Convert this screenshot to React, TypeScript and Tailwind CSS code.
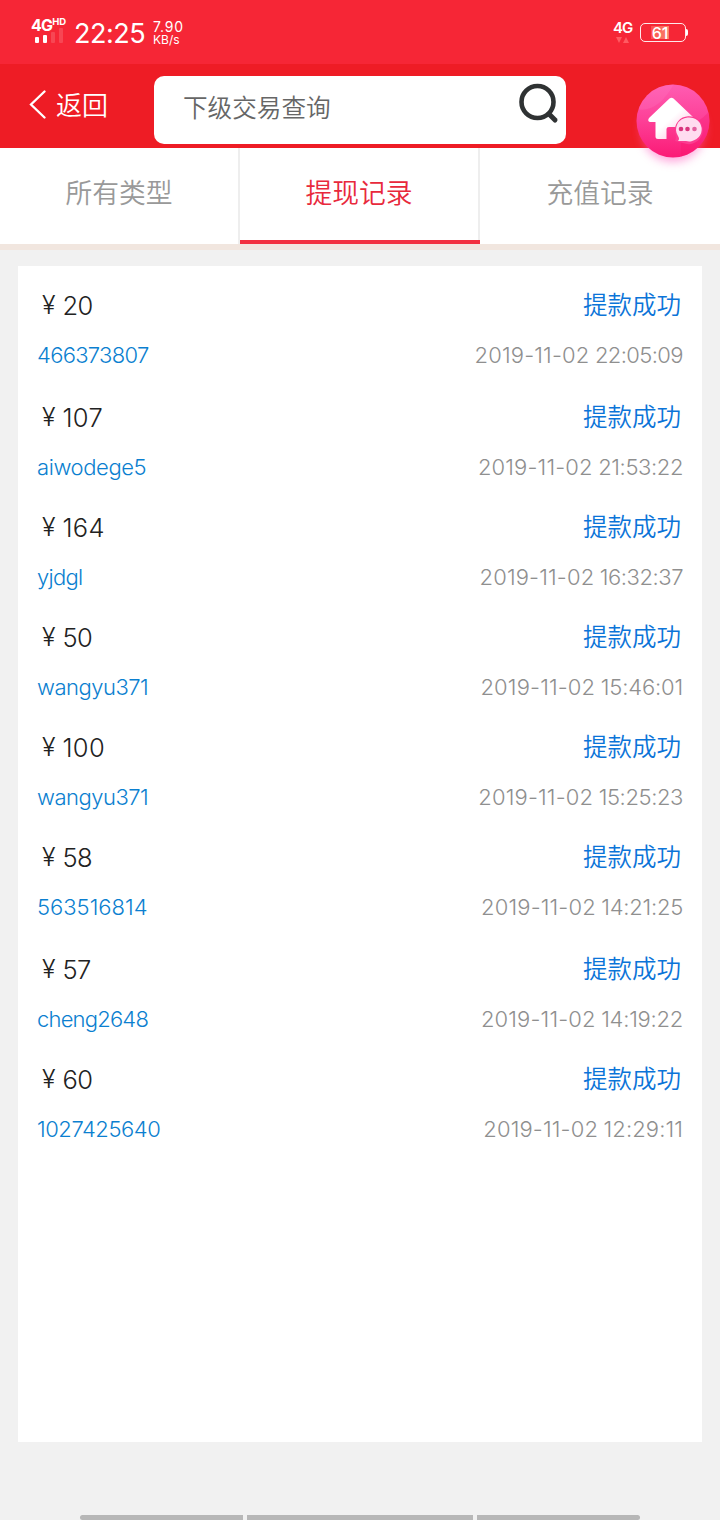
import clsx from "clsx";

const tabs = [
  { label: "所有类型", active: false },
  { label: "提现记录", active: true },
  { label: "充值记录", active: false },
];

const records = [
  { amount: "20", user: "466373807", date: "2019-11-02", time: "22:05:09", height: "h-[112px]", userTracking: "tracking-[-0.7px]", timeTracking: "tracking-[-0.6px]" },
  { amount: "107", user: "aiwodege5", date: "2019-11-02", time: "21:53:22", height: "h-[110px]", userTracking: "tracking-[-0.4px]", timeTracking: "tracking-[-0.4px]" },
  { amount: "164", user: "yjdgl", date: "2019-11-02", time: "16:32:37", height: "h-[110px]", userTracking: "tracking-[-0.7px]", timeTracking: "tracking-[-0.45px]" },
  { amount: "50", user: "wangyu371", date: "2019-11-02", time: "15:46:01", height: "h-[110px]", userTracking: "tracking-[-0.5px]", timeTracking: "tracking-[-0.15px]" },
  { amount: "100", user: "wangyu371", date: "2019-11-02", time: "15:25:23", height: "h-[110px]", userTracking: "tracking-[-0.5px]", timeTracking: "tracking-[-0.4px]" },
  { amount: "58", user: "563516814", date: "2019-11-02", time: "14:21:25", height: "h-[112px]", userTracking: "tracking-[0px]", timeTracking: "tracking-[-0.25px]" },
  { amount: "57", user: "cheng2648", date: "2019-11-02", time: "14:19:22", height: "h-[110px]", userTracking: "tracking-[-0.8px]", timeTracking: "tracking-[-0.25px]" },
  { amount: "60", user: "1027425640", date: "2019-11-02", time: "12:29:11", height: "h-[110px]", userTracking: "tracking-[-0.45px]", timeTracking: "tracking-[0.1px]" },
];

function StatusBar() {
  return (
    <div className="flex h-16 items-start justify-between bg-[#f62636] text-white">
      <div className="flex items-start pl-8">
        <div className="w-[42px] pt-[17px]">
          <div className="flex items-start whitespace-nowrap">
            <span className="-ml-px text-[16px] leading-[16px] font-bold tracking-[-0.8px]">4G</span>
            <span className="text-[9.500px] leading-[10px] font-bold">HD</span>
          </div>
          <svg width="32" height="18" viewBox="0 0 32 18" className="-mt-[7px]">
            <rect x="3" y="11" width="4" height="6" rx="1" fill="#fff" />
            <rect x="11" y="9" width="4" height="8" rx="1" fill="#fff" />
            <rect x="19" y="6" width="4" height="11" rx="1" fill="#fff" opacity=".15" />
            <rect x="27" y="2" width="4" height="15" rx="1" fill="#fff" opacity=".15" />
          </svg>
        </div>
        <span className="w-[79px] pt-[18px] text-[27px] leading-8 tracking-[-0.5px]">22:25</span>
        <div className="pt-5">
          <div className="text-[14px] leading-[14px] tracking-[0.8px]">7.90</div>
          <div className="text-[12px] leading-[11px]">KB/s</div>
        </div>
      </div>
      <div className="flex items-start pr-[32px]">
        <div className="w-[27px] pt-5">
          <div className="text-[15px] leading-[15px] font-semibold tracking-[-1px]">4G</div>
          <svg width="16" height="8" viewBox="0 0 16 8" className="ml-[2px] mt-[1px]">
            <path d="M1 1h6L4 7z" fill="#ff5a62" />
            <path d="M8 7h6L11 1z" fill="#ff5a62" />
          </svg>
        </div>
        <div className="mt-[23px] flex items-center">
          <div className="flex h-[19px] w-[46px] items-center rounded-[5px] border-[1.5px] border-white/90 pl-[10px]">
            <span className="flex h-[13px] w-[18px] items-center justify-center bg-linear-to-r from-[#fb4f50] to-[#f8806a] text-[16px] leading-none font-medium">
              61
            </span>
          </div>
          <div className="h-[7px] w-[2px] rounded-r bg-white" />
        </div>
      </div>
    </div>
  );
}

function HomeBubble() {
  return (
    <svg width="100" height="110" viewBox="0 0 100 110" className="absolute top-[71px] left-[623px]">
      <defs>
        <linearGradient id="bubble" x1="0" y1="0" x2="0" y2="1">
          <stop offset="0" stopColor="#ff5cb2" />
          <stop offset="0.5" stopColor="#fd3f96" />
          <stop offset="1" stopColor="#fb1a76" />
        </linearGradient>
        <linearGradient id="house" x1="0" y1="0" x2="1" y2="1">
          <stop offset="0.5" stopColor="#fff" />
          <stop offset="0.85" stopColor="#ffc4e2" />
        </linearGradient>
        <filter id="glow" x="-30%" y="-30%" width="160%" height="160%">
          <feGaussianBlur stdDeviation="5" />
        </filter>
        <clipPath id="disc">
          <circle cx="50" cy="50" r="36.500" />
        </clipPath>
      </defs>
      <circle cx="50" cy="59" r="32" fill="#ff5fc0" opacity=".55" filter="url(#glow)" />
      <circle cx="50" cy="50" r="36.500" fill="url(#bubble)" />
      <path d="M13 38Q34 43 51 13H13z" fill="#ff86cc" opacity=".2" clipPath="url(#disc)" />
      <path d="M58 55Q76 54 88 38V88H58z" fill="#f81469" opacity=".3" clipPath="url(#disc)" />
      <path
        d="M46.500 27.500Q48.500 26 50.500 27.500L70 46Q72 50 67 50H66V68H54V58Q54 56 52 56H46Q43.500 56 43.500 58V68H35Q32.500 68 32.500 65.500V51H27Q24 50 26 47z"
        fill="url(#house)"
      />
      <path d="M52 70Q54 67 52 61A14 14 0 1 1 64 73z" fill="#fb3c90" />
      <path
        d="M64.500 46.500A12.500 12 0 1 1 63 70H55Q57 68 55 65A12.500 12 0 0 1 64.500 46.500z"
        fill="#ffdcf0"
      />
      <circle cx="58" cy="58" r="2.300" fill="#d8357e" />
      <circle cx="64.500" cy="58" r="2.300" fill="#d8357e" />
      <circle cx="71.500" cy="58" r="2.300" fill="#e3609f" />
    </svg>
  );
}

function Header() {
  return (
    <div className="flex h-[84px] items-start bg-[#ee1c25]">
      <div className="flex h-[82px] w-[154px] items-center pl-7 text-white">
        <svg width="19" height="30" viewBox="0 0 19 30" fill="none" stroke="currentColor" strokeWidth="2.300" className="-mt-[2px]">
          <path d="M16.500 2.500L3 15.500L16.500 28.500" strokeLinecap="round" />
        </svg>
        <span className="mt-px ml-[9px] text-[26px] leading-10 font-[350]">返回</span>
      </div>
      <div className="mt-3 flex h-[68px] w-[412px] items-start justify-between rounded-[10px] bg-white pr-[6px] pl-[29px]">
        <span className="pt-[12px] text-[24.600px] leading-10 font-[350] text-[#666]">下级交易查询</span>
        <svg width="42" height="42" viewBox="0 0 42 42" fill="none" stroke="#2f3233" className="mt-[6px]">
          <circle cx="19.500" cy="20" r="16" strokeWidth="4.600" />
          <path d="M31 32L37 38" strokeWidth="5" strokeLinecap="round" />
        </svg>
      </div>
    </div>
  );
}

function Tabs() {
  return (
    <div className="grid h-[102px] grid-cols-3 border-b-[6px] border-[#f1e6df] bg-white">
      {tabs.map((tab, i) => (
        <div
          key={tab.label}
          className={clsx(
            "flex items-start justify-center pt-[25px] text-[26.800px] leading-10 font-[350]",
            i !== 1 && "text-[#999]",
            i === 0 && "border-r-2 border-[#eee]",
            tab.active && "border-b-4 border-[#f2303f] pr-[2px] text-[#e8293c] shadow-[inset_-2px_0_0_#eee]",
          )}
        >
          {tab.label}
        </div>
      ))}
    </div>
  );
}

export default function App() {
  return (
    <div className="relative flex h-[1520px] w-[720px] flex-col overflow-hidden bg-[#f1f1f1] font-['Inter','Noto_Sans_CJK_SC_DemiLight','Noto_Sans_CJK_SC',sans-serif]">
      <StatusBar />
      <Header />
      <Tabs />

      {/* Record list */}
      <div className="mx-[18px] mt-4 h-[1176px] bg-white pt-[14px] pr-[19px] pl-[19px]">
        {records.map((item) => (
          <div key={item.time} className={item.height}>
            <div className="flex h-[50px] items-center justify-between">
              <div className="flex items-center pt-[2px] pl-[5px] text-[25.500px] font-light text-[#222]">
                <span className="w-[20.500px] text-[25px]">¥</span>
                <span className={item.amount.length > 2 ? "tracking-[0.3px]" : "tracking-[-0.7px]"}>{item.amount}</span>
              </div>
              <span className="pt-px pr-[2px] text-[24.500px] font-[350] text-[#0b74d8]">提款成功</span>
            </div>
            <div className="flex h-[50px] items-center justify-between text-[22px] font-light">
              <span className={clsx("text-[#0b7fd0]", item.userTracking)}>{item.user}</span>
              <span className="flex gap-[5.500px] text-[#8f8f8f]">
                <span className="tracking-[0.15px]">{item.date}</span>
                <span className={item.timeTracking}>{item.time}</span>
              </span>
            </div>
          </div>
        ))}
      </div>

      {/* Bottom gesture bar */}
      <div className="mt-auto flex h-[5px] justify-center gap-1">
        <div className="w-[163px] rounded-l-full bg-[#b7b7b7]" />
        <div className="w-[226px] bg-[#b7b7b7]" />
        <div className="w-[163px] rounded-r-full bg-[#b7b7b7]" />
      </div>

      <HomeBubble />
    </div>
  );
}
